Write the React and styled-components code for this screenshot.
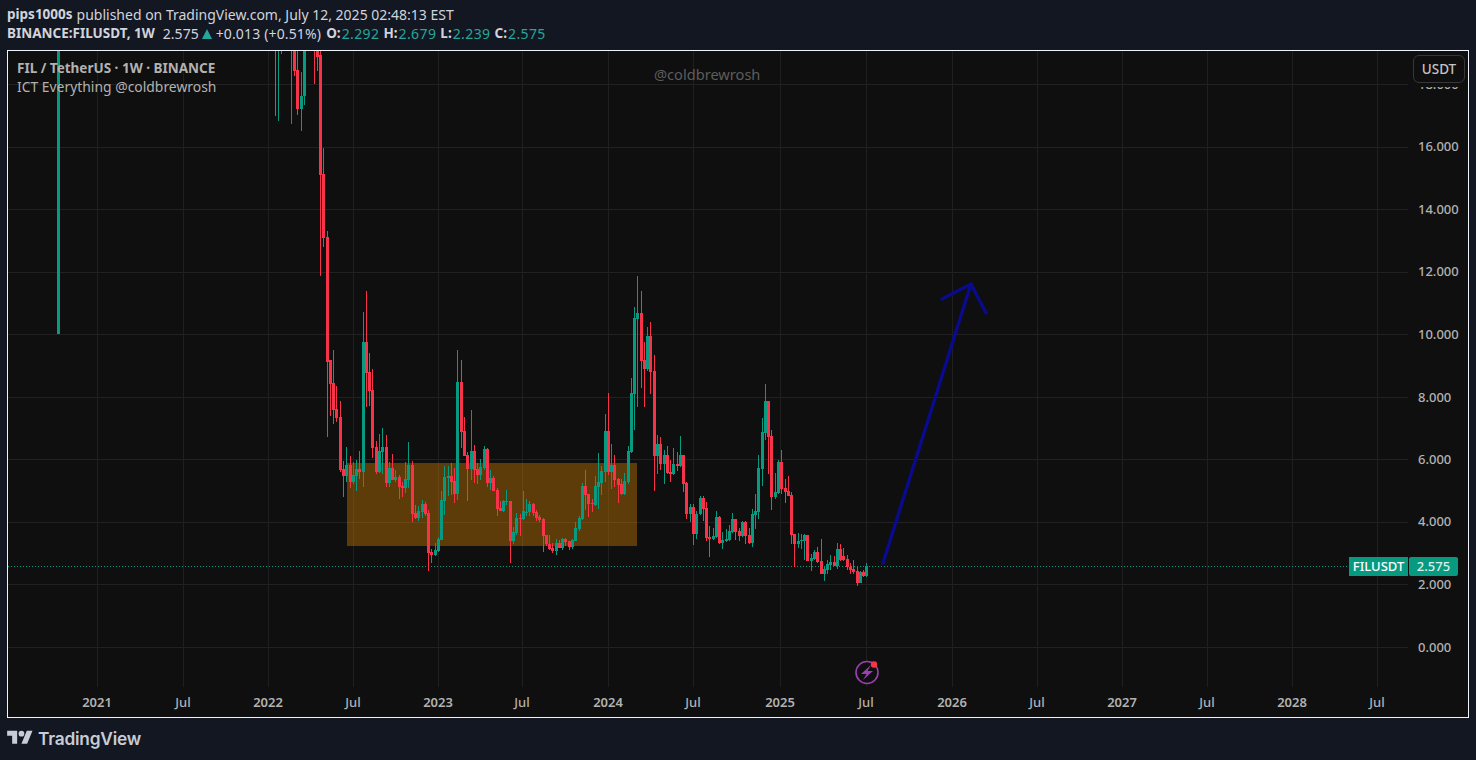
import styled, { createGlobalStyle } from 'styled-components';

const RED = '#f7334a';
const GREEN = '#089981';
const FONT = '"Noto Sans", sans-serif';

const GlobalStyle = createGlobalStyle`
  html, body { margin: 0; padding: 0; background: #131722; }
  body { font-family: ${FONT}; overflow: hidden; }
`;

// [left, body top, body bottom, wick top, wick bottom, green?]  page pixels
const candles = [
  [57,50,334,50,334,1],
  [274,50,51,50,116,0],[277,50,51,50,121,1],[280,50,51,50,54,1],[290,50,51,50,124,1],
  [293,50,71,50,76,0],[296,70,109,50,115,0],[300,96,109,72,131,1],[303,50,96,50,105,1],
  [313,50,51,50,84,0],[316,50,57,50,71,0],[319,55,175,50,276,0],[322,174,238,148,247,0],
  [326,237,362,231,437,0],[329,360,384,360,416,0],[332,383,410,350,424,0],[335,409,418,386,422,0],
  [339,417,470,401,472,0],[342,469,476,461,497,0],[345,465,476,447,482,1],[349,465,482,456,488,0],
  [352,475,482,462,484,1],[355,469,476,460,491,1],[358,469,472,451,479,0],[362,342,472,312,487,1],
  [365,342,373,291,407,0],[368,372,391,353,406,0],[371,390,448,369,458,0],[375,447,472,441,474,0],
  [378,451,472,434,473,1],[381,447,452,428,474,1],[385,447,483,435,487,0],[388,468,483,462,487,1],
  [391,468,480,454,480,0],[394,477,480,470,482,1],[398,477,487,475,499,0],[401,486,488,482,497,0],
  [404,479,488,462,493,1],[407,465,480,442,488,1],[411,465,514,461,522,0],[414,513,518,505,519,0],
  [417,511,518,506,521,1],[421,504,512,500,518,1],[424,504,514,502,516,0],[427,513,553,510,571,0],
  [430,552,555,549,563,0],[434,550,555,543,556,1],[437,539,551,537,552,1],[440,500,540,491,540,1],
  [443,477,501,466,515,1],[447,476,478,466,496,1],[450,476,482,463,495,0],[453,481,494,468,503,0],
  [456,382,494,350,500,1],[460,382,432,360,448,0],[463,431,456,417,456,0],[466,455,469,452,501,0],
  [470,451,469,410,480,1],[473,451,470,445,483,0],[476,469,475,463,484,0],[479,467,475,459,480,1],
  [483,449,468,446,470,1],[486,449,483,448,487,0],[489,478,483,470,490,1],[492,478,491,476,491,0],
  [496,490,509,488,516,0],[499,508,511,501,511,0],[502,501,511,500,512,1],[505,501,502,490,505,1],
  [509,501,541,501,563,0],[512,532,541,527,544,1],[515,518,533,513,535,1],[519,518,519,514,536,0],
  [522,511,519,491,520,1],[525,512,513,499,516,1],[528,504,512,501,516,1],[532,504,513,503,516,0],
  [535,512,518,510,521,0],[538,517,520,515,522,0],[542,519,536,518,552,0],[545,535,544,535,546,0],
  [548,544,549,535,550,0],[551,548,551,543,553,0],[555,543,551,539,555,1],[558,543,548,540,548,0],
  [561,539,548,538,550,1],[564,539,542,538,546,0],[568,541,547,541,550,0],[571,540,547,539,549,1],
  [574,528,541,522,541,1],[578,518,529,516,531,1],[581,486,519,483,520,1],[584,486,495,470,510,0],
  [587,494,504,494,517,0],[591,503,504,499,512,0],[594,486,505,476,506,1],[597,482,487,453,509,1],
  [600,471,483,466,495,1],[604,431,472,414,482,1],[607,431,472,393,475,0],[610,465,472,444,489,1],
  [613,465,480,455,487,0],[617,479,485,478,503,0],[620,484,494,479,495,0],[623,481,494,473,495,1],
  [627,451,482,446,484,1],[630,393,452,378,453,1],[633,318,394,307,430,1],[636,313,319,276,407,1],
  [640,313,361,291,388,0],[643,360,369,342,407,0],[646,336,369,327,371,1],[649,336,372,322,394,0],
  [653,371,456,355,491,0],[656,444,456,435,474,1],[659,444,464,437,470,0],[663,455,464,450,484,1],
  [666,455,473,446,474,0],[669,472,474,460,482,0],[672,464,474,448,475,1],[676,464,466,452,471,0],
  [679,455,466,436,467,1],[682,455,484,455,492,0],[685,483,514,482,519,0],[689,507,514,504,522,1],
  [692,507,534,504,545,0],[695,514,534,511,539,1],[699,498,514,496,515,1],[702,498,509,496,521,0],
  [705,508,538,502,541,0],[708,537,539,526,557,0],[712,536,539,528,540,1],[715,517,537,511,538,1],
  [718,517,543,516,544,0],[721,540,543,532,549,1],[725,539,541,529,542,1],[728,531,540,525,541,1],
  [731,519,532,513,533,1],[734,519,532,519,540,0],[738,531,536,528,541,0],[741,522,536,521,537,1],
  [744,522,536,521,544,0],[748,535,543,528,544,0],[751,514,543,509,547,1],[754,511,515,494,529,1],
  [757,468,512,455,519,1],[761,432,469,418,486,1],[764,401,433,384,440,1],[767,401,437,401,474,0],
  [770,436,497,430,510,0],[774,492,497,473,499,1],[777,462,493,460,494,1],[780,462,489,450,494,0],
  [784,488,492,479,503,0],[787,491,496,476,496,0],[790,495,535,492,544,0],[793,534,544,534,567,0],
  [797,541,544,533,548,1],[800,540,541,534,549,1],[803,535,541,534,560,1],[806,535,561,535,561,0],
  [810,558,561,554,571,1],[813,552,559,550,560,1],[816,552,562,547,563,0],[820,561,574,539,574,0],
  [823,569,574,566,581,1],[826,564,570,560,574,1],[829,562,565,555,570,1],[833,562,566,556,566,0],
  [836,549,566,543,569,1],[839,549,560,544,561,0],[842,556,560,548,561,0],[846,559,567,555,570,0],
  [849,567,570,563,574,0],[852,569,572,560,574,0],[856,571,583,566,586,0],[859,572,583,571,583,1],
  [862,572,576,570,577,0],[865,566,576,563,577,1],
];

const priceLabels = [
  ['18.000', 89], ['16.000', 151], ['14.000', 214], ['12.000', 276], ['10.000', 339],
  ['8.000', 402], ['6.000', 464], ['4.000', 526], ['2.000', 589], ['0.000', 652],
];
const hLines = [84, 147, 209, 272, 334, 397, 459, 522, 584, 647];
const timeLabels = [
  ['2021', 97, 1], ['Jul', 183, 0], ['2022', 268, 1], ['Jul', 353, 0], ['2023', 438, 1], ['Jul', 522, 0],
  ['2024', 608, 1], ['Jul', 693, 0], ['2025', 780, 1], ['Jul', 866, 0], ['2026', 952, 1], ['Jul', 1037, 0],
  ['2027', 1122, 1], ['Jul', 1207, 0], ['2028', 1292, 1], ['Jul', 1377, 0],
];

const Page = styled.div`
  width: 1476px;
  height: 760px;
  display: flex;
  flex-direction: column;
  background: #131722;
  color: #d1d4dc;
`;

const Header = styled.header`
  height: 50px;
  padding: 5px 0 0 7px;
  box-sizing: border-box;
  font-size: 14px;
  line-height: 19px;
  white-space: nowrap;
`;

const HeaderLine = styled.div`
  display: flex;
  align-items: center;
`;

const Bold = styled.b`
  font-weight: 700;
  font-size: 13.5px;
  margin-right: ${(p) => p.$gap || 1}px;
`;

const Value = styled.span`
  color: #26a69a;
  letter-spacing: 0.4px;
  margin-right: 4px;
`;

const Plain = styled.span`
  margin-right: ${(p) => p.$gap || 0}px;
  letter-spacing: ${(p) => p.$spread || 0}px;
`;

const UpArrow = styled.i`
  width: 0;
  height: 0;
  margin: 0 4px 0 3px;
  border-left: 5.5px solid transparent;
  border-right: 5.5px solid transparent;
  border-bottom: 10px solid #26a69a;
`;

const ChartFrame = styled.main`
  position: relative;
  width: 1462px;
  height: 668px;
  margin-left: 7px;
  box-sizing: border-box;
  border: 1px solid #f0f3fa;
  background: #0f0f0f;
  overflow: hidden;
`;

const ChartSvg = styled.svg`
  display: block;
  width: 100%;
  height: 100%;
`;

const AxisText = styled.text`
  font-family: ${FONT};
  font-size: 13px;
  fill: #b2b2b2;
  font-weight: ${(p) => (p.$bold ? 600 : 500)};
`;

const Legend = styled.div`
  position: absolute;
  left: 9px;
  top: 8px;
  color: #b2b2b2;
`;

const LegendTitle = styled.div`
  font-size: 13.5px;
  font-weight: 700;
  line-height: 19px;
`;

const LegendNote = styled.div`
  font-size: 13.9px;
  line-height: 17px;
`;

const Watermark = styled.div`
  position: absolute;
  left: 646px;
  top: 13px;
  color: #5d5d5d;
  font-size: 14.6px;
  line-height: 20px;
`;

const CurrencyBox = styled.div`
  position: absolute;
  right: 0;
  top: 0;
  width: 56px;
  height: 36px;
  background: #0f0f0f;
`;

const CurrencyButton = styled.div`
  margin: 4px 0 0 1px;
  width: 52px;
  height: 28px;
  box-sizing: border-box;
  border: 1px solid #363636;
  border-radius: 6px;
  color: #c4c4c4;
  font-size: 13.5px;
  font-weight: 500;
  line-height: 26px;
  text-align: center;
`;

const PriceTag = styled.div`
  position: absolute;
  top: 506px;
  height: 19px;
  left: ${(p) => p.$left}px;
  width: ${(p) => p.$width}px;
  background: ${GREEN};
  border-radius: ${(p) => (p.$round ? '2px' : '0')};
  color: ${(p) => (p.$round ? '#dcefe9' : '#fff')};
  font-size: 13px;
  font-weight: 500;
  line-height: 19px;
  text-align: center;
`;

const Footer = styled.footer`
  flex: 1;
  display: flex;
  align-items: center;
  gap: 5px;
  padding: 0 0 2px 7px;
`;

const BrandName = styled.span`
  font-family: Inter, sans-serif;
  font-size: 17.3px;
  font-weight: 600;
  letter-spacing: -0.2px;
  color: #c8ccd5;
`;

function Chart() {
  return (
    <ChartSvg viewBox="8 51 1460 666">
      {hLines.map((y) => (
        <line key={y} x1="8" x2="1408" y1={y + 0.5} y2={y + 0.5} stroke="#212121" />
      ))}
      {timeLabels.map(([, x]) => (
        <line key={x} x1={x + 0.5} x2={x + 0.5} y1="51" y2="687" stroke="#1f1f1f" />
      ))}
      <rect x="347" y="463" width="290" height="83" fill="#ff9800" fillOpacity="0.33" />
      <line x1="8" x2="1348" y1="566.5" y2="566.5" stroke={GREEN} strokeDasharray="1 2" />
      <g shapeRendering="crispEdges">
        {candles.map(([x, t, b, wt, wb, up]) => (
          <g key={x} fill={up ? GREEN : RED}>
            <rect x={x + 1} y={wt} width="1" height={wb - wt} />
            <rect x={x} y={t} width="3" height={b - t} />
          </g>
        ))}
      </g>
      <path d="M883 563L971 284M942 299L971 284L986 313" fill="none" stroke="#0a0a8c" strokeWidth="3.4" strokeLinecap="round" strokeLinejoin="round" />
      <circle cx="867" cy="672.5" r="11" fill="#0f0f0f" stroke="#9c3fb0" strokeWidth="1.6" />
      <path d="M871 665L861 674H866.5L863 680L873 671H867.5Z" fill="#9c3fb0" />
      <circle cx="874" cy="664.5" r="3.2" fill="#f23645" />
      {priceLabels.map(([label, y]) => (
        <AxisText key={label} x="1418" y={y}>{label}</AxisText>
      ))}
      {timeLabels.map(([label, x, bold]) => (
        <AxisText key={x} x={x} y="707" textAnchor="middle" $bold={bold}>{label}</AxisText>
      ))}
    </ChartSvg>
  );
}

function TvLogo() {
  return (
    <svg width="26" height="20" viewBox="0 0 36 28" fill="#c8ccd5">
      <path d="M14 22H7V11H0V4h14v18zM28 22h-8l7.5-18h8L28 22z" />
      <circle cx="20" cy="8" r="4" />
    </svg>
  );
}

export default function App() {
  return (
    <Page>
      <GlobalStyle />
      <Header>
        <HeaderLine>
          <Bold $gap={4}>pips1000s</Bold>
          <Plain>published on TradingView.com, July 12, 2025 02:48:13 EST</Plain>
        </HeaderLine>
        <HeaderLine>
          <Bold $gap={8}>BINANCE:FILUSDT, 1W</Bold>
          <Plain>2.575</Plain>
          <UpArrow />
          <Plain $gap={5} $spread={0.15}>+0.013 (+0.51%)</Plain>
          <Bold>O:</Bold><Value>2.292</Value>
          <Bold>H:</Bold><Value>2.679</Value>
          <Bold>L:</Bold><Value>2.239</Value>
          <Bold>C:</Bold><Value>2.575</Value>
        </HeaderLine>
      </Header>
      <ChartFrame>
        <Chart />
        <Legend>
          <LegendTitle>FIL / TetherUS · 1W · BINANCE</LegendTitle>
          <LegendNote>ICT Everything @coldbrewrosh</LegendNote>
        </Legend>
        <Watermark>@coldbrewrosh</Watermark>
        <CurrencyBox>
          <CurrencyButton>USDT</CurrencyButton>
        </CurrencyBox>
        <PriceTag $left={1341} $width={59}>FILUSDT</PriceTag>
        <PriceTag $left={1401} $width={49} $round>2.575</PriceTag>
      </ChartFrame>
      <Footer>
        <TvLogo />
        <BrandName>TradingView</BrandName>
      </Footer>
    </Page>
  );
}
